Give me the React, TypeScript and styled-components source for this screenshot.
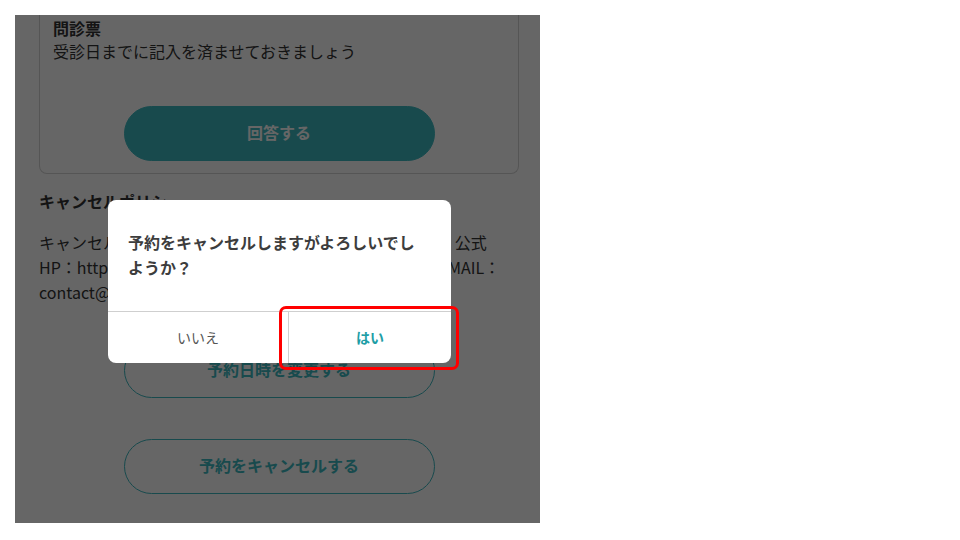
import React from "react";
import styled, { createGlobalStyle } from "styled-components";

const GlobalStyle = createGlobalStyle`
  html, body {
    margin: 0;
    background: #fff;
    font-family: "Noto Sans CJK JP", "Noto Sans", sans-serif;
    color: #333;
  }
`;

const teal = "#3cb9c1";

const Page = styled.div`
  padding: 15px;
`;

const Frame = styled.div`
  position: relative;
  width: 525px;
  height: 508px;
  overflow: hidden;
  background: #fff;
`;

const Content = styled.div`
  display: flex;
  flex-direction: column;
  padding: 0 21px 0 24px;
`;

const Card = styled.div`
  display: flex;
  flex-direction: column;
  border: 1px solid #d4d4d4;
  border-top: none;
  border-radius: 0 0 8px 8px;
  padding: 2px 13px 12px;
`;

const CardTitle = styled.div`
  font-size: 16px;
  font-weight: 700;
  line-height: 23px;
`;

const CardText = styled.div`
  font-size: 16px;
  line-height: 23px;
`;

const PillButton = styled.button<{ $filled?: boolean }>`
  align-self: center;
  width: 311px;
  height: 55px;
  padding: 0 0 3px;
  border-radius: 28px;
  border: 1px solid ${teal};
  background: ${(p) => (p.$filled ? teal : "#fff")};
  color: ${(p) => (p.$filled ? "#fff" : teal)};
  font-family: inherit;
  font-size: 16px;
  font-weight: 700;
  cursor: pointer;
`;

const AnswerButton = styled(PillButton)`
  margin-top: 43px;
`;

const Heading = styled.h3`
  margin: 15px 0 0;
  font-size: 16px;
  font-weight: 700;
  line-height: 24px;
`;

const Policy = styled.p`
  margin: 17px 0 0;
  font-size: 16px;
  line-height: 25px;
`;

const Actions = styled.div`
  display: flex;
  flex-direction: column;
  gap: 41px;
  margin-top: 38px;
`;

const Overlay = styled.div`
  position: absolute;
  inset: 0;
  background: rgba(0, 0, 0, 0.6);
  display: flex;
  justify-content: center;
  align-items: center;
  padding: 24px 0 0 4px;
`;

const Dialog = styled.div`
  width: 343px;
  background: #fff;
  border-radius: 8px;
  display: flex;
  flex-direction: column;
`;

const Message = styled.div`
  padding: 30px 28px 31px 20px;
  font-size: 16px;
  font-weight: 700;
  line-height: 25px;
  color: #3d3d3d;
`;

const Footer = styled.div`
  display: grid;
  grid-template-columns: 180px 1fr;
  border-top: 1px solid #cfcfcf;
`;

const DialogButton = styled.button<{ $primary?: boolean }>`
  position: relative;
  height: 51px;
  border: none;
  border-left: ${(p) => (p.$primary ? "1px solid #cfcfcf" : "none")};
  background: transparent;
  font-family: inherit;
  font-size: 14px;
  font-weight: ${(p) => (p.$primary ? 700 : 400)};
  color: ${(p) => (p.$primary ? "#1e9ea6" : "#555")};
  cursor: pointer;
`;

const Highlight = styled.span`
  position: absolute;
  top: -6px;
  left: -10px;
  right: -8px;
  bottom: -7px;
  border: 3px solid #f00;
  border-radius: 7px;
  pointer-events: none;
`;

export default function App() {
  return (
    <>
      <GlobalStyle />
      <Page>
        <Frame>
          <Content>
            <Card>
              <CardTitle>問診票</CardTitle>
              <CardText>受診日までに記入を済ませておきましょう</CardText>
              <AnswerButton $filled>回答する</AnswerButton>
            </Card>
            <Heading>キャンセルポリシー</Heading>
            <Policy>
              キャンセルの際は、予約日の前日までにご連絡ください。公式
              <br />
              HP：https://www.example-clinic.jp/contact-us/ または MAIL：
              <br />
              contact@example-clinic.jp
            </Policy>
            <Actions>
              <PillButton>予約日時を変更する</PillButton>
              <PillButton>予約をキャンセルする</PillButton>
            </Actions>
          </Content>
          <Overlay>
            <Dialog>
              <Message>予約をキャンセルしますがよろしいでしようか？</Message>
              <Footer>
                <DialogButton>いいえ</DialogButton>
                <DialogButton $primary>
                  はい
                  <Highlight />
                </DialogButton>
              </Footer>
            </Dialog>
          </Overlay>
        </Frame>
      </Page>
    </>
  );
}
